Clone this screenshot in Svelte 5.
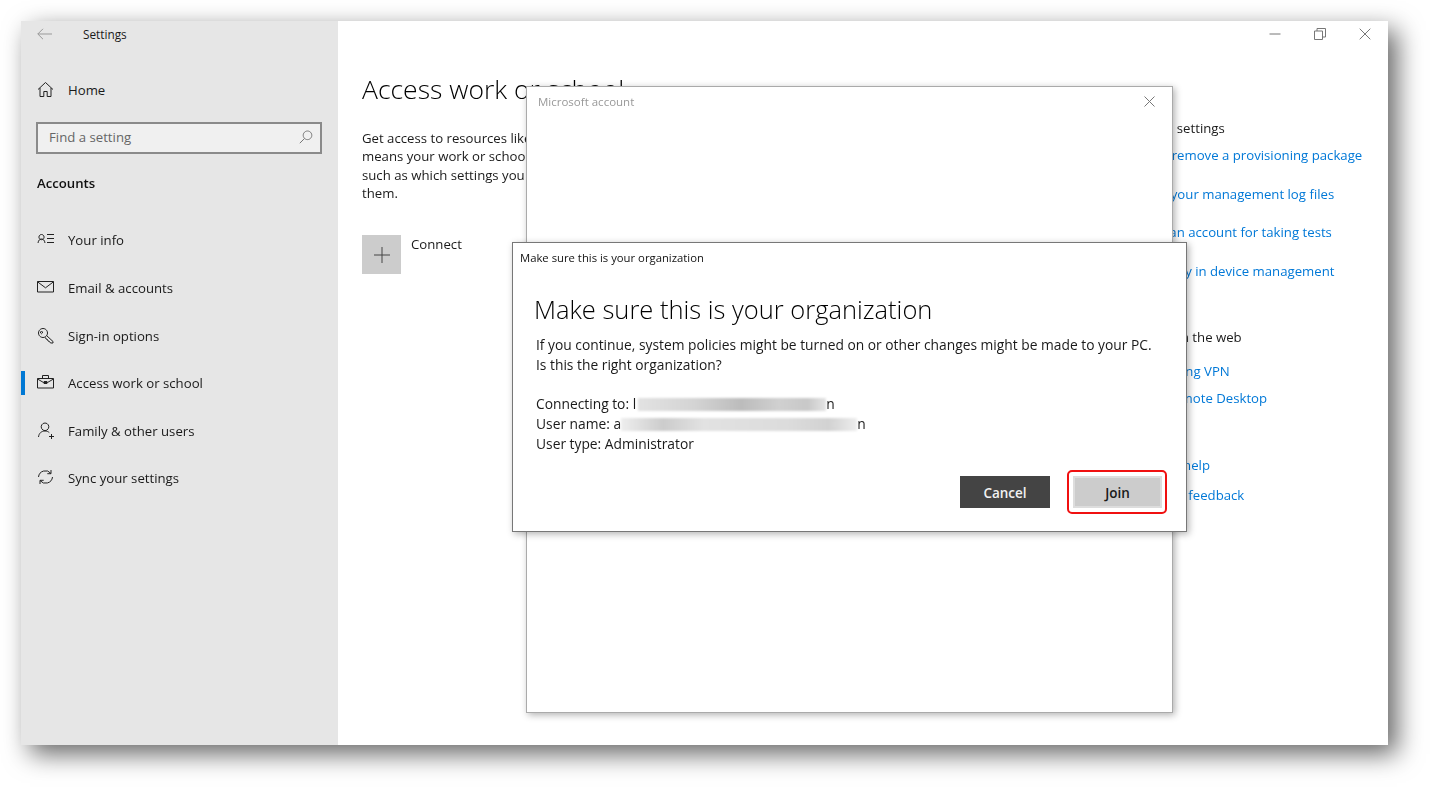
<script>
  const navItems = [
    { label: "Your info", icon: "info" },
    { label: "Email & accounts", icon: "mail" },
    { label: "Sign-in options", icon: "key" },
    { label: "Access work or school", icon: "work", active: true },
    { label: "Family & other users", icon: "family" },
    { label: "Sync your settings", icon: "sync" }
  ];

  const icons = {
    info: "M4.500 3.500a2.600 2.600 0 1 0 .01 0M1 12c.4-2.800 1.800-4 3.500-4s3.100 1.200 3.500 4M10 3.500h7M10 7.500h7M10 11.500h7",
    mail: "M.5 2.500h16v10.500H.5zM.5 2.800l8 6 8-6",
    key: "M6 1.500a4.500 4.500 0 1 0 .01 0M4.500 4.500a1 1 0 1 0 .01 0M9.500 8.500l6.500 6v1.500h-2.500l-1-1.500-1.500-.5-.5-1.500-1.500-.5-.5-1.500",
    work: "M.5 4.500h16v9.500H.5zM5.500 4.500V1.500h6v3M.5 5l6 3.500h4l6-3.500M7 7.500h3v2H7z",
    family: "M8 1a3.800 3.800 0 1 0 .01 0M1.500 15c.4-3.800 3-6 6.500-6 1.800 0 3.200.6 4.300 1.600M14.500 12v5M12 14.500h5",
    sync: "M1.500 8A7 7 0 0 1 14 4.500M14 1v3.700h-3.700M15.500 8A7 7 0 0 1 3 11.500M3 15v-3.700h3.700"
  };
</script>

<div class="page">
  <div class="window">
    <aside class="sidebar">
      <div class="titlebar">
        <svg class="back" width="16" height="12" viewBox="0 0 16 12"><path d="M6 .8.8 6 6 11.200M.8 6H15" /></svg>
        <span>Settings</span>
      </div>
      <div class="home">
        <svg class="icon" width="18" height="18" viewBox="0 0 18 18"><path d="M1 8.500 8.500 1.500 16 8.500M3 7v8.500h3.800v-5h3.400v5H14V7" /></svg>
        <span>Home</span>
      </div>
      <div class="search">
        <span>Find a setting</span>
        <svg width="14" height="14" viewBox="0 0 14 14"><path d="M8.500 1a4.300 4.300 0 1 0 .01 0M5.500 8.500.8 13.200" /></svg>
      </div>
      <h2>Accounts</h2>
      <nav>
        {#each navItems as item}
          <div class="nav-item" class:active={item.active}>
            <svg class="icon" width="18" height="18" viewBox="0 0 18 18"><path d={icons[item.icon]} /></svg>
            <span>{item.label}</span>
          </div>
        {/each}
      </nav>
    </aside>

    <main class="content">
      <div class="controls">
        <svg width="12" height="12" viewBox="0 0 12 12"><path d="M.5 6h11" /></svg>
        <svg width="12" height="12" viewBox="0 0 12 12"><path d="M.5 3h8v8.500h-8zM3 3V.5h8.500v8.500H8.500" /></svg>
        <svg width="12" height="12" viewBox="0 0 12 12"><path d="m.7.7 10.600 10.600M11.300.7.700 11.300" /></svg>
      </div>
      <div class="columns">
        <section class="primary">
          <h1>Access work or school</h1>
          <p>
            Get access to resources like email, apps, and the network. Connecting<br />
            means your work or school might control some things on this device,<br />
            such as which settings you can change. For specific info about this, ask<br />
            them.
          </p>
          <div class="connect">
            <div class="tile">
              <svg width="16" height="16" viewBox="0 0 16 16"><path d="M8 0v16M0 8h16" /></svg>
            </div>
            <span>Connect</span>
          </div>
        </section>
        <section class="related">
          <h3>Related settings</h3>
          <a href="#top">Add or remove a provisioning package</a>
          <a href="#top">Export your management log files</a>
          <a href="#top">Set up an account for taking tests</a>
          <a href="#top">Enroll only in device management</a>
          <h3 class="group">Help from the web</h3>
          <a class="vpn" href="#top">Setting VPN</a>
          <a class="desktop" href="#top">Remote Desktop</a>
          <a class="help first" href="#top">Get help</a>
          <a class="help" href="#top">Give feedback</a>
        </section>
      </div>
    </main>

    <div class="ms-dialog">
      <div class="ms-title">
        <span>Microsoft account</span>
        <svg width="11" height="11" viewBox="0 0 11 11"><path d="m.5.5 10 10M10.500.5l-10 10" /></svg>
      </div>
    </div>

    <div class="org-dialog">
      <div class="org-title">Make sure this is your organization</div>
      <div class="org-body">
        <h2 class="org-heading">Make sure this is your organization</h2>
        <p>
          If you continue, system policies might be turned on or other changes might be made to your PC.<br />
          Is this the right organization?
        </p>
        <p class="details">
          <span class="row">Connecting to: l<i class="redact one"></i><span>n</span></span>
          <span class="row">User name: a<i class="redact two"></i><span>n</span></span>
          <span class="row">User type: Administrator</span>
        </p>
      </div>
      <div class="buttons">
        <button class="cancel">Cancel</button>
        <button class="join">Join<span class="mark"></span></button>
      </div>
    </div>
  </div>
</div>

<style>
  :global(body) {
    background: #fff;
    font-family: "Open Sans", "Noto Sans", sans-serif;
    color: #1a1a1a;
  }

  svg path {
    fill: none;
    stroke: currentColor;
    stroke-width: 1;
  }

  .page {
    box-sizing: border-box;
    height: 787px;
    padding: 21px 0 0 21px;
    overflow: hidden;
  }

  .window {
    position: relative;
    display: grid;
    grid-template-columns: 317px 1fr;
    width: 1367px;
    height: 724px;
    background: #fff;
    box-shadow: 9px 9px 24px rgba(0, 0, 0, 0.6);
    font-size: 13.200px;
    filter: blur(0.3px);
  }

  .sidebar {
    background: #e6e6e6;
    padding-left: 16px;
    padding-right: 16px;
  }

  .titlebar {
    display: flex;
    align-items: center;
    height: 26px;
    font-size: 11.800px;
  }

  .back {
    color: #999;
    margin-right: 30px;
  }

  .home {
    display: flex;
    align-items: center;
    margin-top: 30px;
    height: 26px;
    gap: 13px;
  }

  .icon {
    flex: none;
    color: #222;
  }

  .search {
    display: flex;
    align-items: center;
    justify-content: space-between;
    box-sizing: border-box;
    height: 32px;
    margin-top: 19px;
    margin-left: -1px;
    padding: 0 7px 3px 11px;
    border: 2px solid #8a8a8a;
    background: #f0f0f0;
    color: #666;
  }

  .search svg {
    color: #777;
  }

  h2 {
    margin: 19px 0 0;
    font-size: 13.200px;
    font-weight: 600;
    line-height: 20px;
    color: #111;
  }

  nav {
    margin-top: 23.600px;
  }

  .nav-item {
    position: relative;
    display: flex;
    align-items: center;
    gap: 13px;
    height: 47.600px;
  }

  .nav-item.active::before {
    content: "";
    position: absolute;
    left: -16px;
    top: 12px;
    width: 4px;
    height: 24px;
    background: #0078d4;
  }

  .content {
    display: flex;
    flex-direction: column;
    padding-left: 24px;
    min-width: 0;
  }

  .controls {
    display: flex;
    justify-content: flex-end;
    align-items: center;
    gap: 33px;
    height: 26px;
    padding-right: 17px;
    color: #777;
  }

  .columns {
    display: flex;
  }

  .primary {
    width: 765px;
    flex: none;
  }

  h1 {
    margin: 26px 0 0;
    font-size: 26.500px;
    font-weight: 300;
    line-height: 32px;
    white-space: nowrap;
    color: #000;
  }

  .primary p {
    margin: 24px 0 0;
    line-height: 18.300px;
    white-space: nowrap;
  }

  .connect {
    display: flex;
    gap: 10px;
    margin-top: 33px;
  }

  .connect span {
    line-height: 19px;
  }

  .tile {
    display: flex;
    align-items: center;
    justify-content: center;
    width: 39px;
    height: 39px;
    background: #cccccc;
    color: #444;
  }

  .related {
    display: flex;
    flex-direction: column;
    align-items: flex-start;
    padding-top: 71px;
    white-space: nowrap;
  }

  h3 {
    margin: 0;
    font-size: 13.200px;
    font-weight: 400;
    line-height: 20px;
  }

  a {
    color: #0078d7;
    text-decoration: none;
    line-height: 20px;
    margin-top: 7px;
  }

  a + a {
    margin-top: 18.500px;
  }

  .group {
    margin-top: 46px;
  }

  .vpn {
    margin-left: 31px;
    margin-top: 14px;
  }

  .desktop {
    margin-left: 38px;
  }

  a.desktop {
    margin-top: 7px;
  }

  a.help {
    margin-left: 31px;
  }

  a.help.first {
    margin-top: 47px;
  }

  a.help + a.help {
    margin-top: 10px;
  }

  .ms-dialog {
    position: absolute;
    left: 505px;
    top: 65px;
    width: 647px;
    height: 627px;
    box-sizing: border-box;
    background: #fff;
    border: 1px solid #aaa;
    box-shadow: 2px 2px 7px rgba(0, 0, 0, 0.3);
  }

  .ms-title {
    display: flex;
    justify-content: space-between;
    align-items: center;
    height: 29px;
    padding: 0 17px 0 11px;
    font-size: 11.500px;
    color: #999;
  }

  .ms-title svg {
    color: #777;
  }

  .org-dialog {
    position: absolute;
    left: 491px;
    top: 221px;
    display: flex;
    flex-direction: column;
    width: 675px;
    height: 290px;
    box-sizing: border-box;
    background: #fff;
    border: 1px solid #777;
    box-shadow: 2px 2px 7px rgba(0, 0, 0, 0.3);
  }

  .org-title {
    padding: 6px 7px 0;
    font-size: 11.300px;
    line-height: 17px;
    color: #111;
  }

  .org-body {
    flex: 1;
    padding: 0 23px;
  }

  .org-heading {
    margin: 26px 0 0 -2px;
    font-size: 25.500px;
    font-weight: 300;
    line-height: 34px;
    color: #000;
  }

  .org-body p {
    margin: 9px 0 0;
    font-size: 13.800px;
    line-height: 20px;
    white-space: nowrap;
  }

  .org-body .details {
    margin-top: 19px;
  }

  .row {
    display: flex;
    align-items: center;
    height: 20px;
  }

  .redact {
    display: block;
    height: 13px;
    filter: blur(1px);
  }

  .redact.one {
    width: 188px;
    margin-left: 2px;
    background: linear-gradient(90deg, #e2e2e2, #d4d4d4 30%, #bcbcbc 55%, #d0d0d0 75%, #c8c8c8 90%, #e4e4e4);
  }

  .redact.two {
    width: 236px;
    margin-left: 0;
    background: linear-gradient(90deg, #eee, #ccc 18%, #e2e2e2 35%, #dcdcdc 70%, #d2d2d2 88%, #eee);
  }

  .buttons {
    display: flex;
    justify-content: flex-end;
    gap: 23px;
    padding: 0 24px 23px 0;
  }

  button {
    position: relative;
    width: 90px;
    height: 32px;
    border: 2px solid;
    font: inherit;
    font-size: 13.500px;
    font-weight: 600;
    padding: 1px 0 0;
  }

  .cancel {
    background: #444;
    border-color: #444;
    color: #f2f2f2;
  }

  .join {
    width: 89px;
    background: #ccc;
    border-color: #ddd;
    color: #1a1a1a;
  }

  .mark {
    position: absolute;
    inset: -8px -7px -8px -8px;
    border: 2px solid #f01010;
    border-radius: 5px;
  }
</style>
